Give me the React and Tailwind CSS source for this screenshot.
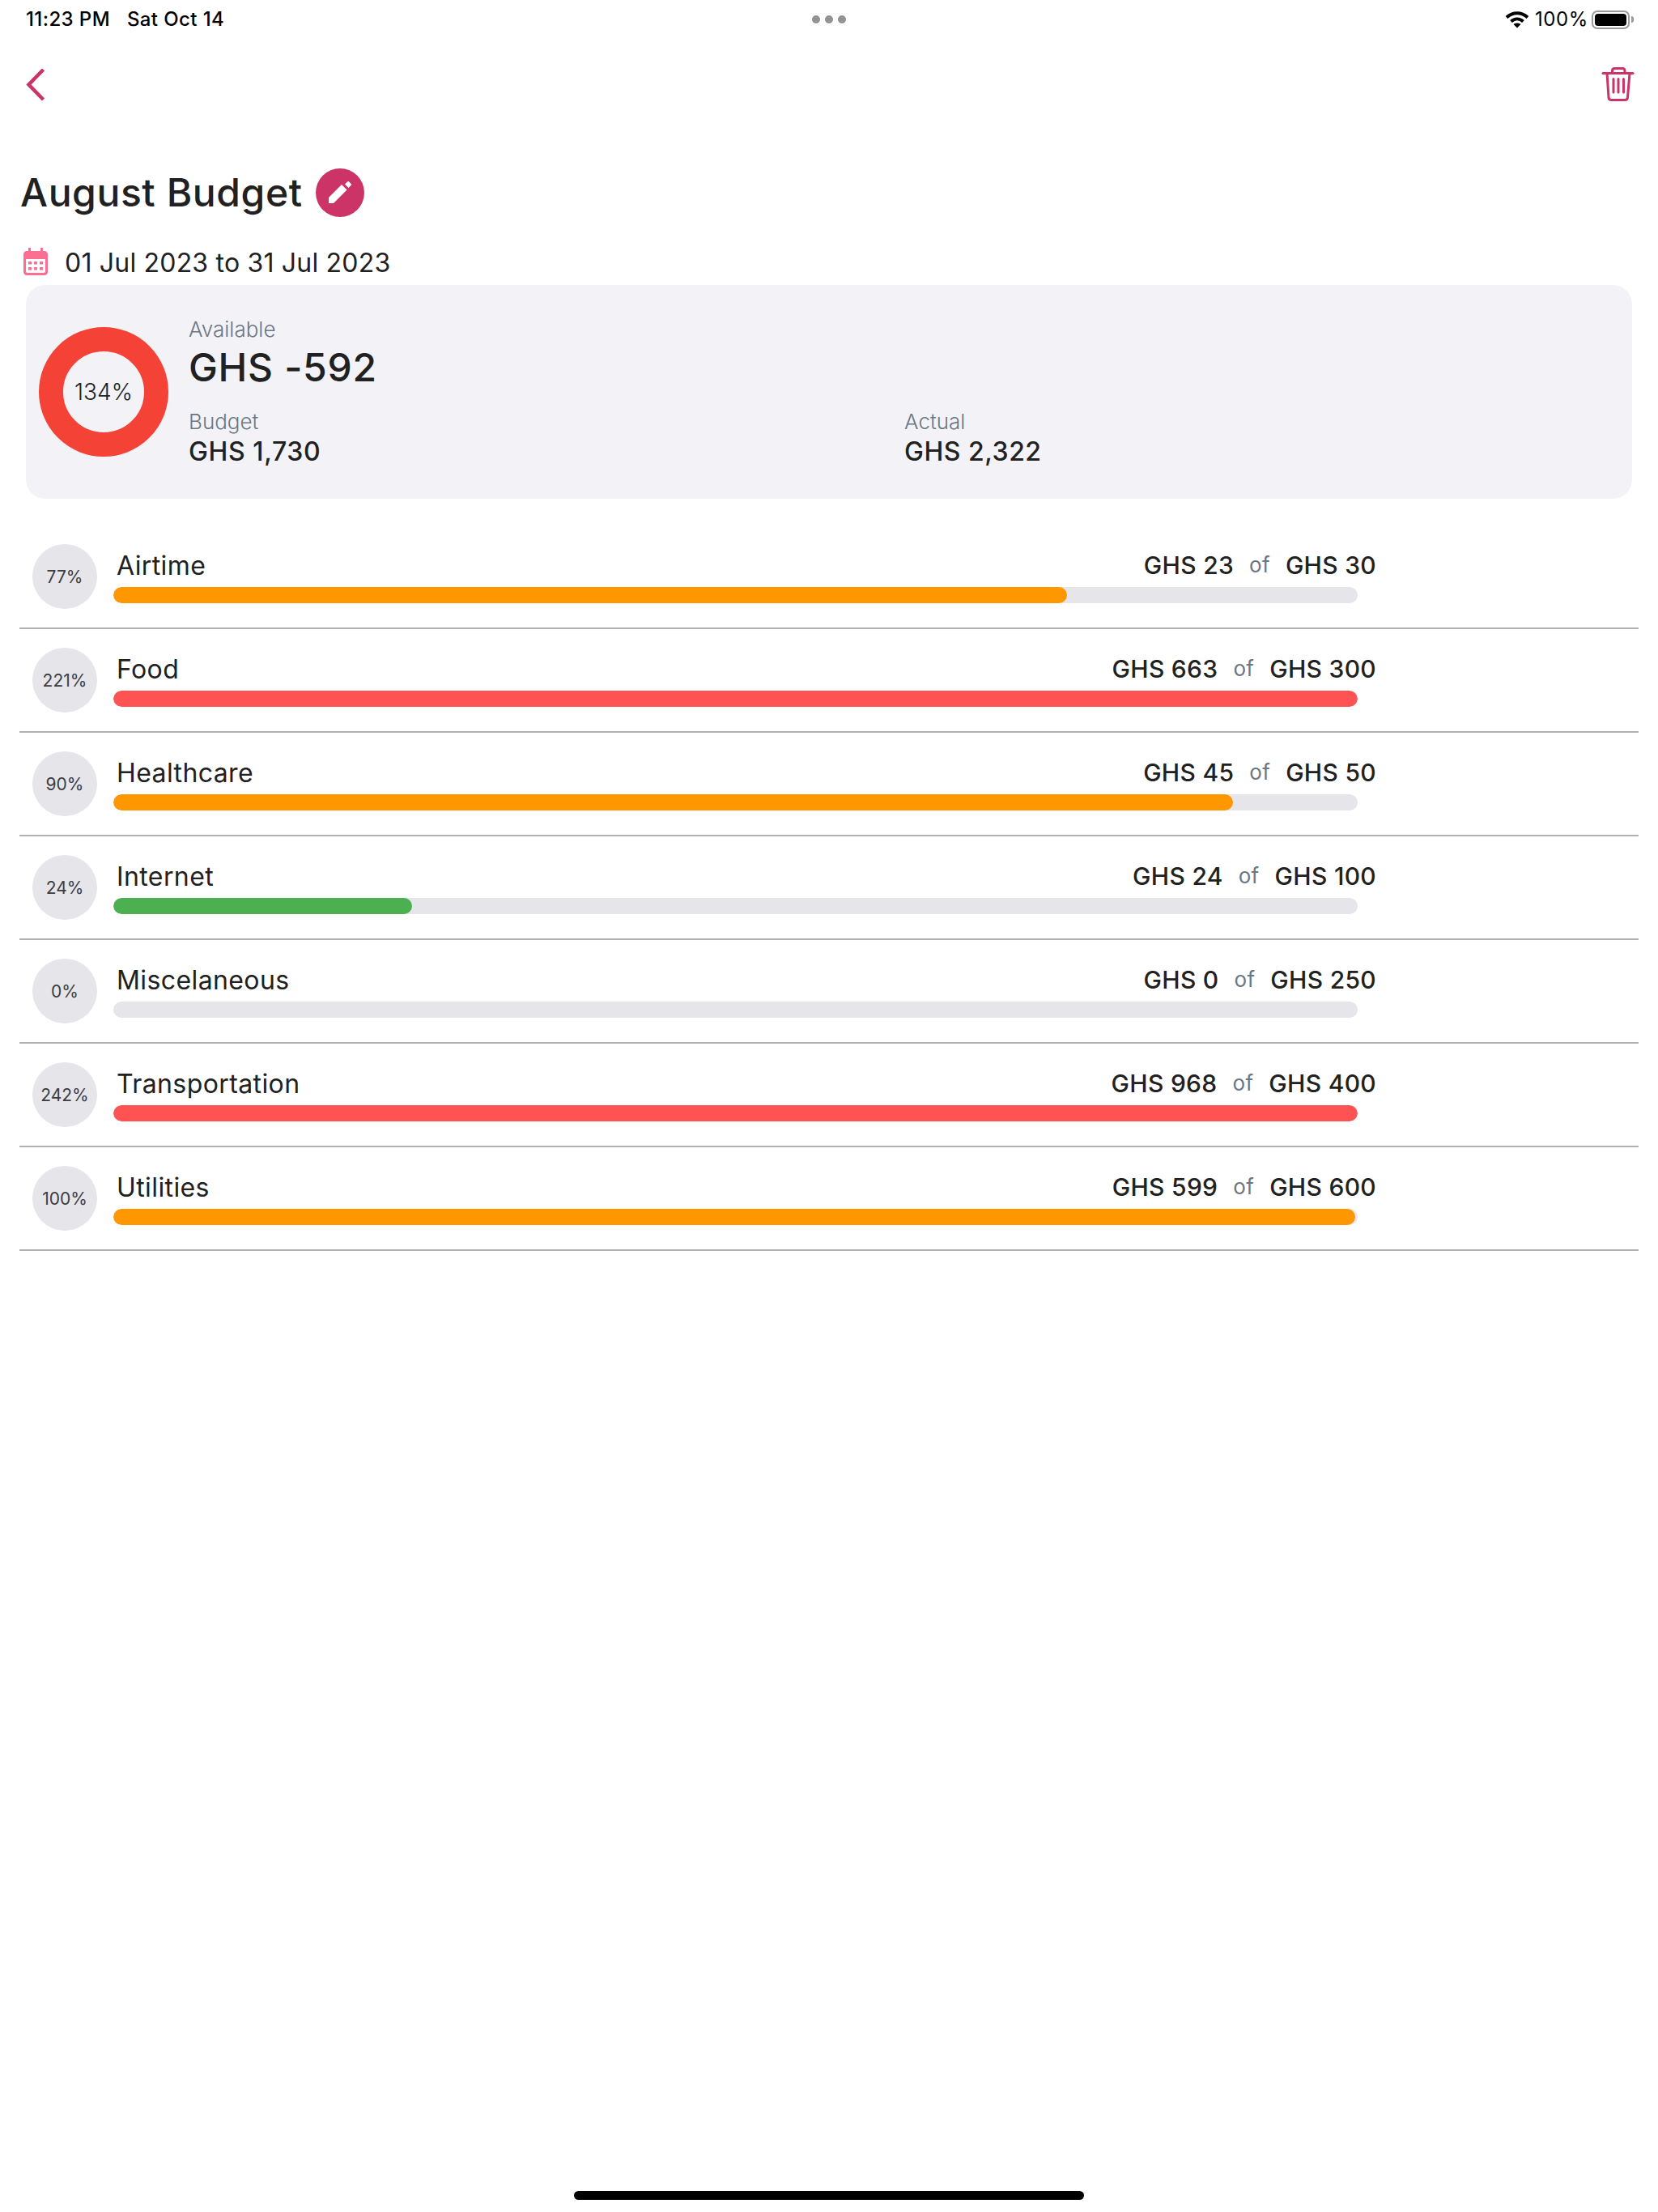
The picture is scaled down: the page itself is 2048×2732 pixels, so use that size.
import React from 'react';

const rows = [
    { name: 'Airtime', pct: '77%', spent: 'GHS 23', total: 'GHS 30', width: 76.67, color: 'bg-[#ff9800]' },
    { name: 'Food', pct: '221%', spent: 'GHS 663', total: 'GHS 300', width: 100, color: 'bg-[#ff5252]' },
    { name: 'Healthcare', pct: '90%', spent: 'GHS 45', total: 'GHS 50', width: 90, color: 'bg-[#ff9800]' },
    { name: 'Internet', pct: '24%', spent: 'GHS 24', total: 'GHS 100', width: 24, color: 'bg-[#4caf50]' },
    { name: 'Miscelaneous', pct: '0%', spent: 'GHS 0', total: 'GHS 250', width: 0, color: 'bg-[#ff9800]' },
    { name: 'Transportation', pct: '242%', spent: 'GHS 968', total: 'GHS 400', width: 100, color: 'bg-[#ff5252]' },
    { name: 'Utilities', pct: '100%', spent: 'GHS 599', total: 'GHS 600', width: 99.8, color: 'bg-[#ff9800]' },
];

function BudgetRow({ row }) {
    return (
        <div className="flex h-[128px] items-start border-b-2 border-[#b0b4b8] pl-4 pt-[23px]">
            <div className="flex h-20 w-20 shrink-0 items-center justify-center rounded-full bg-[#e5e5ea] pt-0.5 text-[21px] text-[#3c3c43]">
                {row.pct}
            </div>
            <div className="ml-5 w-[1560px]">
                <div className="mt-1.5 flex h-10 items-center justify-between pl-1 leading-10 text-[#212121]">
                    <span className="mt-0.5 text-[32px] tracking-[0.4px]">{row.name}</span>
                    <span className="flex items-center text-[30px] font-medium tracking-[0.3px]">
                        {row.spent}
                        <span className="ml-[19px] mr-[19px] text-[26px] font-normal text-[#6b7785]">of</span>
                        {row.total}
                    </span>
                </div>
                <div className="mt-[7px] h-5 w-[1537px] overflow-hidden rounded-[10px] bg-[#e5e5ea]">
                    <div className={`h-full rounded-[10px] ${row.color}`} style={{ width: `${row.width}%` }} />
                </div>
            </div>
        </div>
    );
}

export default function App() {
    return (
        <div className="flex min-h-[2732px] w-[2048px] flex-col bg-white font-['Inter',sans-serif] text-[#212121]">
            {/* Status bar */}
            <div className="relative flex h-12 items-center justify-between pl-8 pr-[30px] text-[24px] font-medium tracking-[0.4px] text-black">
                <div className="flex gap-[21px]">
                    <span>11:23 PM</span>
                    <span>Sat Oct 14</span>
                </div>
                <div className="absolute left-[1003px] top-[19px] flex gap-1.5">
                    <span className="h-2.5 w-2.5 rounded-full bg-[#929292]" />
                    <span className="h-2.5 w-2.5 rounded-full bg-[#929292]" />
                    <span className="h-2.5 w-2.5 rounded-full bg-[#929292]" />
                </div>
                <div className="flex items-center">
                    <svg width="30" height="22" viewBox="0 0 30 22" fill="none" stroke="black" strokeWidth="4">
                        <path d="M2 8.5C9.5 1.5 20.5 1.5 28 8.5" />
                        <path d="M7.5 13.5C12 9.5 18 9.5 22.5 13.5" />
                        <path d="M15 21.5L10.5 17C13 15 17 15 19.5 17Z" fill="black" stroke="none" />
                    </svg>
                    <span className="ml-[7px] font-normal tracking-[0.6px]">100%</span>
                    <div className="ml-1 flex h-[23px] w-[47px] items-center justify-center rounded-[7px] border-2 border-[#999999]">
                        <div className="h-[15px] w-[39px] rounded-[4px] bg-black" />
                    </div>
                    <div className="ml-0.5 h-2 w-[3px] rounded-r-sm bg-[#999999]" />
                </div>
            </div>

            {/* Toolbar */}
            <div className="mt-[34px] flex h-[46px] items-center justify-between pl-8 pr-7">
                <svg width="24" height="40" viewBox="0 0 24 40" fill="none" stroke="#cc3366" strokeWidth="4.5">
                    <path d="M21.5 1L3.5 19.5L21.5 38" />
                </svg>
                <svg width="42" height="46" viewBox="0 0 42 46" fill="none" stroke="#cc3366" strokeWidth="3" strokeLinecap="round" strokeLinejoin="round">
                    <path d="M2 8.5H39" />
                    <path d="M13.5 8.5V5.5C13.5 3.5 15 2.5 16.5 2.5H26C28 2.5 29 3.5 29 5.5V8.5" />
                    <path d="M7 8.5L9 38C9 40.5 10.5 41.5 12.5 41.5H29C31 41.5 32.5 40.5 32.5 38L35 8.5" />
                    <path d="M15 15.5V32M21 15.5V32M27.5 15.5V32" />
                </svg>
            </div>

            {/* Title */}
            <div className="mt-20 flex h-[60px] items-center pl-[25px]">
                <h1 className="text-[48px] font-medium leading-[60px] tracking-[0.6px] text-[#212121]">August Budget</h1>
                <div className="ml-4 flex h-[60px] w-[60px] items-center justify-center rounded-full bg-[#cc3366]">
                    <svg width="60" height="60" viewBox="0 0 60 60" fill="white">
                        <path d="M16 36L32 20L38.5 26.5L22 43H16Z" />
                        <path d="M36 19.5L39 16.5C39.7 15.8 40.6 15.8 41.3 16.5L43.5 18.7C44.2 19.4 44.2 20.3 43.5 21L40.5 24Z" />
                    </svg>
                </div>
            </div>

            {/* Dates */}
            <div className="mt-[33px] flex h-11 items-center pl-[29px]">
                <svg width="30" height="34" viewBox="0 0 30 34" fill="#fb6f92">
                    <path d="M6 0H9V4H21V0H24V4H26C28.2 4 30 5.8 30 8V30C30 32.2 28.2 34 26 34H4C1.8 34 0 32.2 0 30V8C0 5.8 1.8 4 4 4H6Z" />
                    <path fill="white" d="M3 14H27V29C27 30 26 31 25 31H5C4 31 3 30 3 29Z" />
                    <path d="M6 17H10V20.5H6ZM13 17H17V20.5H13ZM20 17H24V20.5H20ZM6 24H10V27.5H6ZM13 24H17V27.5H13ZM20 24H24V27.5H20Z" />
                </svg>
                <span className="ml-[21px] mt-[3px] text-[32px] leading-10 tracking-[0.2px] text-[#212121]">01 Jul 2023 to 31 Jul 2023</span>
            </div>

            {/* Summary card */}
            <div className="ml-8 mt-[7px] flex h-[264px] w-[1984px] items-start rounded-[24px] bg-[#f2f2f7] pl-4 pt-[37px]">
                <div className="mt-[15px] flex h-40 w-40 shrink-0 items-center justify-center rounded-full border-[30px] border-[#f44336] text-[28px] font-light text-[#212121]">
                    134%
                </div>
                <div className="ml-[25px]">
                    <div className="text-[26px] font-light leading-9 text-[#6b7785]">Available</div>
                    <div className="text-[48px] font-medium leading-[58px] tracking-[0.7px] text-[#212121]">GHS -592</div>
                    <div className="mt-5 flex">
                        <div className="w-[884px]">
                            <div className="mb-0.5 text-[26px] font-light leading-9 text-[#6b7785]">Budget</div>
                            <div className="text-[32px] font-medium leading-[34px] tracking-[0.6px] text-[#212121]">GHS 1,730</div>
                        </div>
                        <div>
                            <div className="mb-0.5 text-[26px] font-light leading-9 text-[#6b7785]">Actual</div>
                            <div className="text-[32px] font-medium leading-[34px] tracking-[0.5px] text-[#212121]">GHS 2,322</div>
                        </div>
                    </div>
                </div>
            </div>

            {/* Categories */}
            <div className="ml-6 mt-[33px] w-[2000px]">
                {rows.map((row) => (
                    <BudgetRow key={row.name} row={row} />
                ))}
            </div>

            {/* Home indicator */}
            <div className="mb-[15px] ml-[709px] mt-auto h-[11px] w-[630px] rounded-full bg-black" />
        </div>
    );
}
